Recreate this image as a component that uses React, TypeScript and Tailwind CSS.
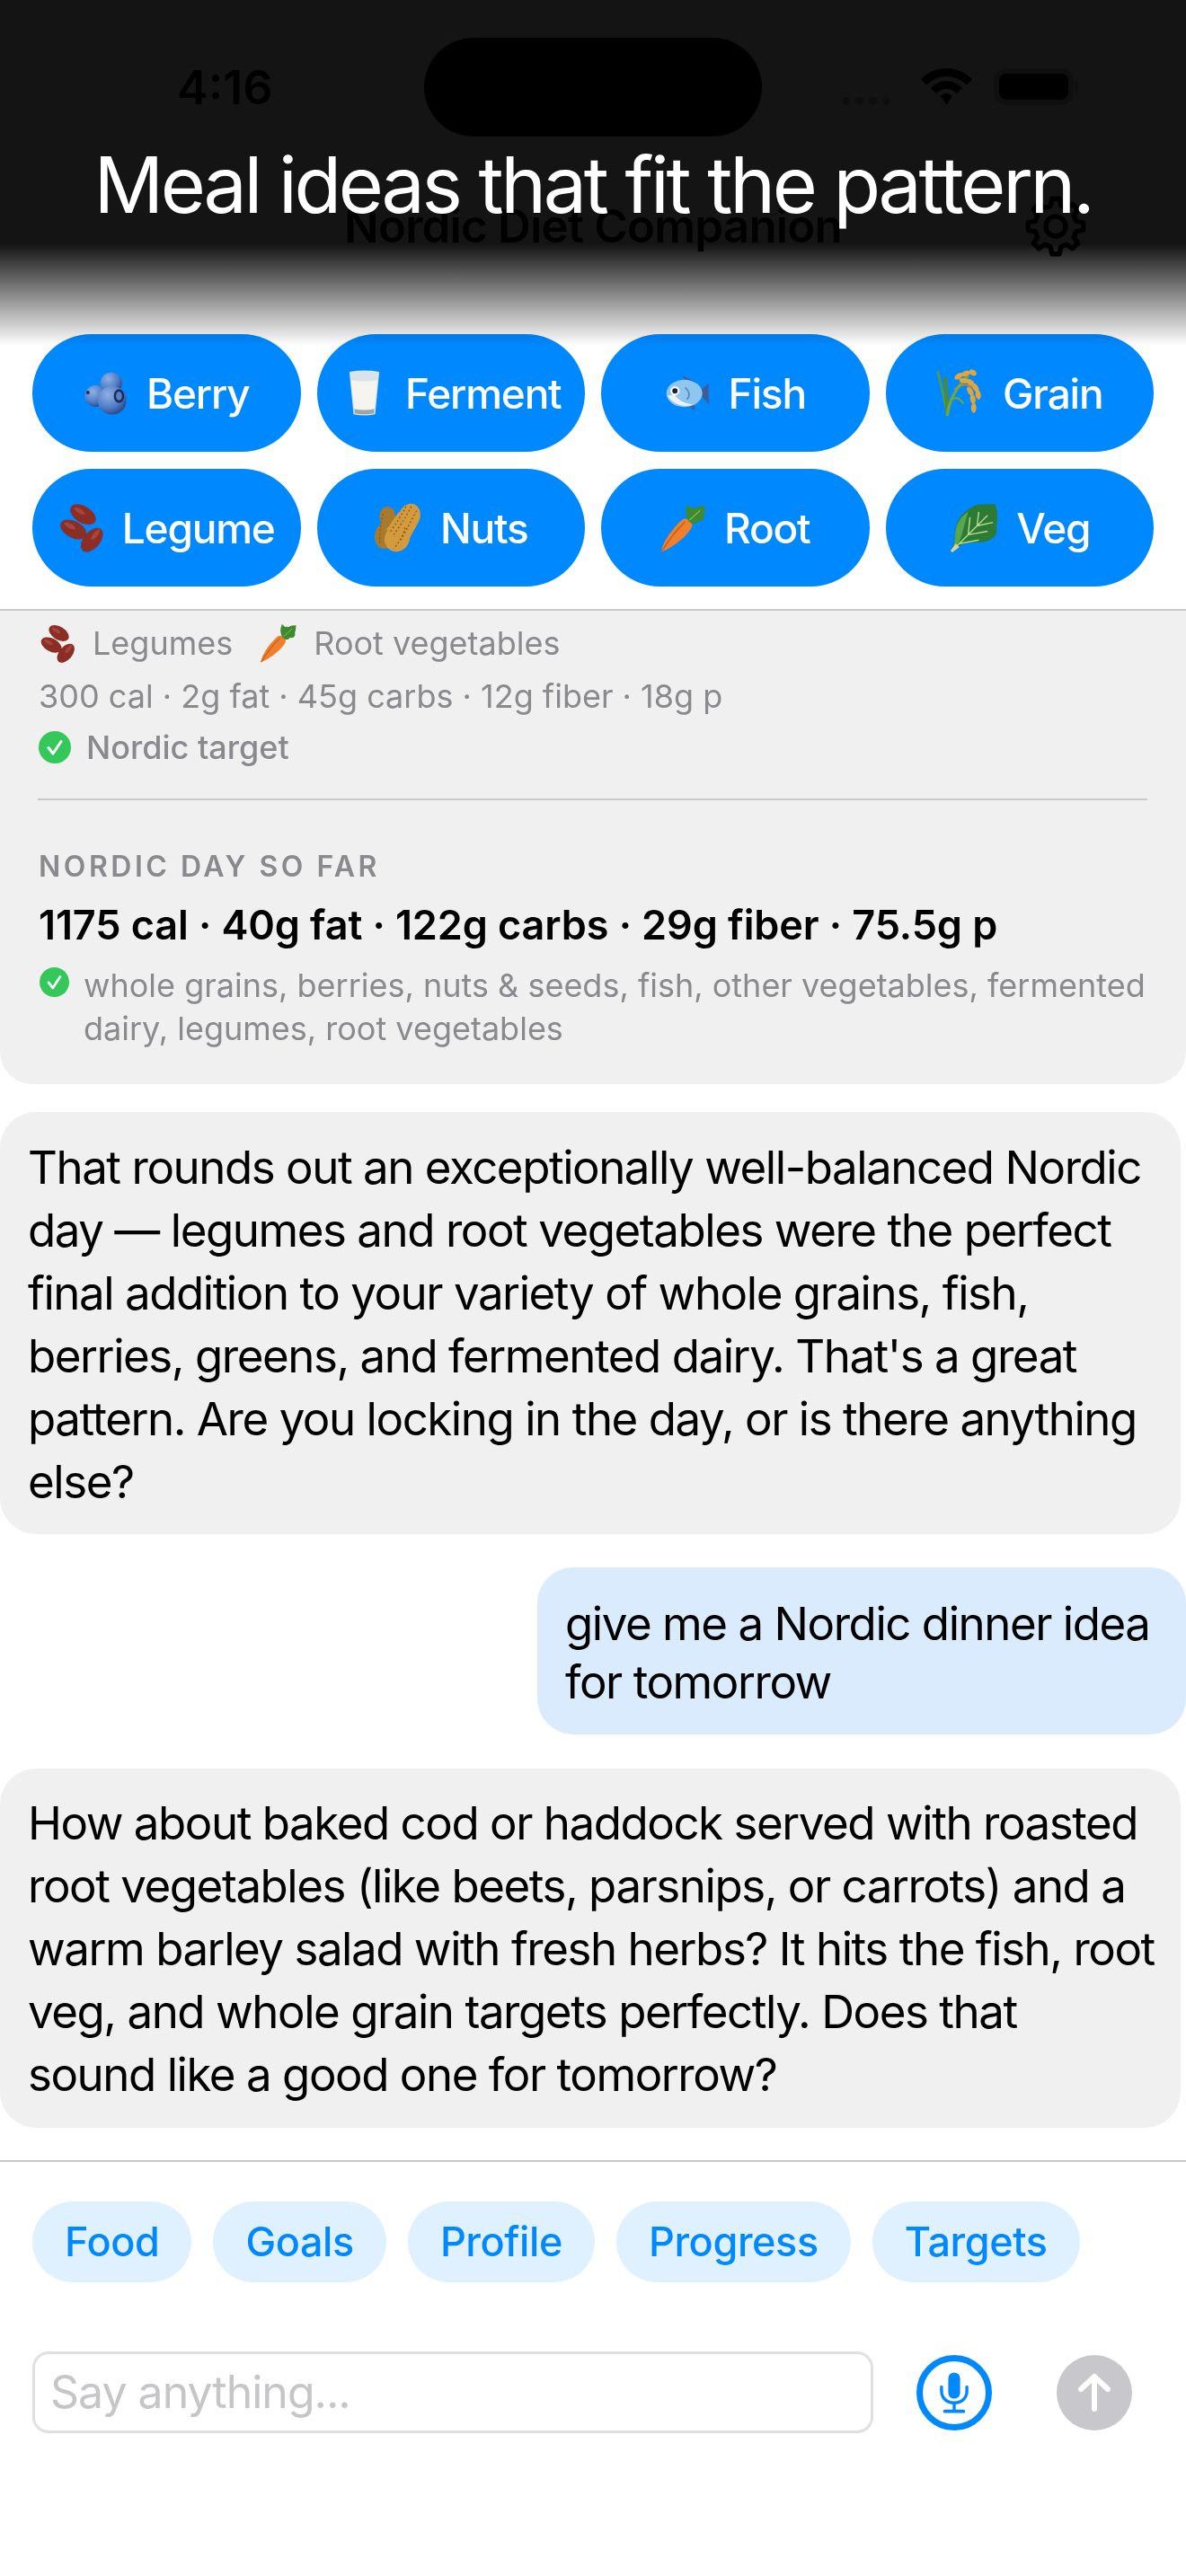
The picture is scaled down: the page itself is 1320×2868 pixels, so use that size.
import React from "react";

function BerryIcon() {
  return (
    <svg viewBox="0 0 50 50" className="w-[50px] h-[48px] shrink-0">
      <defs>
        <radialGradient id="bg1" cx="0.35" cy="0.3" r="0.8"><stop offset="0" stopColor="#8fb0e6" /><stop offset="0.6" stopColor="#4f7cc4" /><stop offset="1" stopColor="#1f3a78" /></radialGradient>
      </defs>
      <circle cx="31" cy="13" r="12.5" fill="url(#bg1)" />
      <circle cx="13" cy="28" r="12.5" fill="url(#bg1)" />
      <circle cx="32" cy="33" r="16.5" fill="url(#bg1)" />
      <ellipse cx="40" cy="28" rx="6" ry="8" fill="#1b2c5c" />
      <ellipse cx="40" cy="28" rx="3.5" ry="5" fill="#5a80c0" />
      <circle cx="4" cy="24" r="2" fill="#1b2c5c" />
    </svg>
  );
}

function MilkIcon() {
  return (
    <svg viewBox="0 0 40 56" className="w-[37px] h-[54px] shrink-0 ml-[8px] mr-[7px]">
      <path d="M2 2 Q20 -1 38 2 L33 53 Q20 56 7 53 Z" fill="#d8e4ea" />
      <path d="M4 12 Q20 15 36 12 L32 47 Q20 49 8 47 Z" fill="#f6f4ee" />
      <path d="M8 47 Q20 49 32 47 L31.5 52 Q20 54 8.5 52 Z" fill="#9aa6aa" />
    </svg>
  );
}

function FishIcon() {
  return (
    <svg viewBox="0 0 52 42" className="w-[51px] h-[40px] shrink-0">
      <path d="M38 20 L51 9 Q49 21 51 34 Z" fill="#3d5d98" />
      <path d="M20 1 Q34 4 42 18 L26 12 Z" fill="#3d5d98" />
      <path d="M22 32 L34 41 L34 28 Z" fill="#3d5d98" />
      <ellipse cx="22" cy="21" rx="21" ry="16" fill="#8fc6ee" />
      <path d="M2 24 Q14 40 32 34 Q18 33 10 22 Z" fill="#eef2f6" />
      <circle cx="11" cy="18" r="5.5" fill="#f4f6f8" />
      <circle cx="11" cy="18" r="3" fill="#1a2238" />
      <path d="M23 14 Q31 22 25 28" stroke="#5d8cc0" strokeWidth="2" fill="none" />
    </svg>
  );
}

function RiceIcon() {
  return (
    <svg viewBox="0 0 54 56" className="w-[54px] h-[55px] shrink-0">
      <path d="M12 54 Q8 30 1 3" stroke="#5c9a3c" strokeWidth="2.4" fill="none" />
      <path d="M12 54 Q12 30 9 10" stroke="#4e8a34" strokeWidth="4" fill="none" />
      <path d="M12 54 Q14 30 36 8" stroke="#6ea644" strokeWidth="3.5" fill="none" />
      <path d="M16 36 Q24 30 30 40" stroke="#6ea644" strokeWidth="2.4" fill="none" />
      <path d="M20 24 Q34 12 48 28" stroke="#c98d2e" strokeWidth="1.4" fill="none" />
      <g fill="#e0a63e">
        <ellipse cx="25" cy="9" rx="5.5" ry="3" transform="rotate(-35 25 9)" />
        <ellipse cx="33" cy="6" rx="5.5" ry="3" transform="rotate(-20 33 6)" />
        <ellipse cx="41" cy="5" rx="4.5" ry="3" transform="rotate(30 41 5)" />
        <ellipse cx="31" cy="14" rx="5.5" ry="3" transform="rotate(10 31 14)" />
        <ellipse cx="38" cy="16" rx="5.5" ry="3" transform="rotate(35 38 16)" />
        <ellipse cx="44" cy="22" rx="5.5" ry="3" transform="rotate(60 44 22)" />
        <ellipse cx="47" cy="30" rx="5.5" ry="3" transform="rotate(80 47 30)" />
        <ellipse cx="38" cy="26" rx="5.5" ry="3" transform="rotate(60 38 26)" />
        <ellipse cx="41" cy="35" rx="5.5" ry="3" transform="rotate(80 41 35)" />
        <ellipse cx="42" cy="45" rx="5.5" ry="3" transform="rotate(90 42 45)" />
      </g>
    </svg>
  );
}

function BeansIcon({ cls }: { cls: string }) {
  return (
    <svg viewBox="0 0 52 56" className={cls}>
      <g fill="#8a2e26">
        <ellipse cx="28" cy="13" rx="16" ry="9.5" transform="rotate(32 28 13)" />
        <ellipse cx="17" cy="30" rx="16" ry="9.5" transform="rotate(28 17 30)" />
        <ellipse cx="38" cy="42" rx="16" ry="9.5" transform="rotate(-50 38 42)" />
      </g>
      <g fill="#b5564b" opacity="0.6">
        <ellipse cx="24" cy="9" rx="7" ry="2.5" transform="rotate(32 24 9)" />
        <ellipse cx="13" cy="26" rx="7" ry="2.5" transform="rotate(28 13 26)" />
        <ellipse cx="42" cy="36" rx="7" ry="2.5" transform="rotate(-50 42 36)" />
      </g>
    </svg>
  );
}

function PeanutIcon() {
  return (
    <svg viewBox="0 0 54 56" className="w-[54px] h-[55px] shrink-0">
      <g fill="#a97a2c">
        <ellipse cx="15" cy="15" rx="9" ry="11" />
        <ellipse cx="11" cy="38" rx="10.5" ry="14" />
        <rect x="7" y="18" width="13" height="16" />
      </g>
      <g fill="#d39a3e">
        <ellipse cx="40" cy="15" rx="12" ry="14.5" transform="rotate(20 40 15)" />
        <ellipse cx="26" cy="40" rx="14" ry="15.5" transform="rotate(30 26 40)" />
        <path d="M28 10 L50 22 L38 44 L14 30 Z" />
      </g>
      <g stroke="#8a5c1c" strokeWidth="1.4" strokeDasharray="2 2.5" fill="none">
        <path d="M42 4 Q34 20 22 36" />
        <path d="M48 9 Q40 24 30 42" />
        <path d="M36 4 Q29 18 17 34" />
        <path d="M35 28 Q32 40 22 52" />
        <path d="M10 12 Q6 30 6 46" />
      </g>
    </svg>
  );
}

function CarrotIcon({ cls }: { cls: string }) {
  return (
    <svg viewBox="0 0 52 56" className={cls}>
      <path d="M1 55 C2 44 14 28 24 19 C30 15 37 19 36 26 C32 36 14 50 1 55 Z" fill="#ee7f2c" />
      <path d="M1 55 C8 44 18 30 28 21" stroke="#c85f1a" strokeWidth="1.4" fill="none" />
      <path d="M32 20 C28 14 28 8 31 1 C34 5 36 6 38 4 C38 8 42 2 51 3 C50 8 51 10 49 13 C51 18 46 22 42 20 C40 24 36 24 32 20 Z" fill="#3f8a2e" />
      <path d="M33 19 L45 8" stroke="#8cc060" strokeWidth="1.2" />
    </svg>
  );
}

function LettuceIcon() {
  return (
    <svg viewBox="0 0 56 56" className="w-[55px] h-[55px] shrink-0">
      <path d="M2 54 C8 46 6 36 8 28 C10 16 18 10 24 6 C32 0 40 2 52 1 C56 8 55 18 54 28 C56 34 52 40 46 42 C38 46 26 44 18 46 C12 48 8 52 4 56 Z" fill="#2c7a34" />
      <path d="M8 30 C10 20 16 14 22 10 C18 22 16 34 12 44 C8 48 6 50 3 54 C8 46 6 38 8 30 Z" fill="#58a650" />
      <path d="M3 55 L44 14 M22 36 L24 16 M22 36 L44 32 M32 26 L34 10 M32 26 L50 22 M12 46 L34 42" stroke="#b6d88e" strokeWidth="1.5" fill="none" />
      <path d="M2 54 L8 46 L12 50 L4 56 Z" fill="#d8d4a0" />
    </svg>
  );
}

function CheckCircle({ cls }: { cls: string }) {
  return (
    <svg viewBox="0 0 36 36" className={cls}>
      <circle cx="18" cy="18" r="18" fill="#34c759" />
      <path d="M11 18.5 L16 25 L25 11.5" stroke="#fff" strokeWidth="3" strokeLinecap="round" strokeLinejoin="round" fill="none" />
    </svg>
  );
}

function gearPath() {
  const teeth = 8;
  const rOut = 31;
  const rIn = 23.5;
  const pts: string[] = [];
  for (let i = 0; i < teeth; i++) {
    const a = (i * 2 * Math.PI) / teeth - Math.PI / 2;
    const step = (2 * Math.PI) / teeth;
    const seq: [number, number][] = [
      [rIn, a - step * 0.32],
      [rOut, a - step * 0.17],
      [rOut, a + step * 0.17],
      [rIn, a + step * 0.32],
    ];
    for (const [r, t] of seq) {
      pts.push(`${(34 + r * Math.cos(t)).toFixed(2)} ${(34 + r * Math.sin(t)).toFixed(2)}`);
    }
  }
  return "M" + pts.join(" L") + " Z";
}

function Gear() {
  return (
    <svg viewBox="0 0 68 68" className="w-[68px] h-[68px]" fill="none" stroke="#000" strokeWidth="5.5" strokeLinejoin="round">
      <path d={gearPath()} />
      <circle cx="34" cy="34" r="11" />
    </svg>
  );
}

const chips1 = [
  { label: "Berry", icon: <BerryIcon /> },
  { label: "Ferment", icon: <MilkIcon /> },
  { label: "Fish", icon: <FishIcon /> },
  { label: "Grain", icon: <RiceIcon /> },
  { label: "Legume", icon: <BeansIcon cls="w-[51px] h-[55px] shrink-0" /> },
  { label: "Nuts", icon: <PeanutIcon /> },
  { label: "Root", icon: <CarrotIcon cls="w-[51px] h-[56px] shrink-0" /> },
  { label: "Veg", icon: <LettuceIcon /> },
];

export default function App() {
  return (
    <div className="relative w-[1320px] h-[2868px] overflow-hidden bg-white text-black font-['Inter','Liberation_Sans',sans-serif]">
      {/* status bar */}
      <div className="h-[170px] flex items-start">
        <div className="w-[472px] pt-[72px] pl-[197px] text-[52px] leading-[52px] font-semibold">4:16</div>
        <div className="w-[376px] h-[110px] mt-[42px] rounded-[55px] bg-black" />
        <div className="flex-1 pt-[76px] pl-[89px] flex items-start">
          <div className="mt-[32px] flex gap-[6px] w-[88px]">
            <span className="w-[9px] h-[9px] rounded-full bg-black/30" />
            <span className="w-[9px] h-[9px] rounded-full bg-black/30" />
            <span className="w-[9px] h-[9px] rounded-full bg-black/30" />
            <span className="w-[9px] h-[9px] rounded-full bg-black/30" />
          </div>
          <svg viewBox="0 0 57 41" className="w-[57px] h-[41px]">
            <path d="M28.5 0 C39 0 49 4 57 12 L51 19 C45 13 37 9 28.5 9 C20 9 12 13 6 19 L0 12 C8 4 18 0 28.5 0 Z" fill="#000" />
            <path d="M28.5 14 C35 14 41 17 46 22 L40 28 C37 25 33 23 28.5 23 C24 23 20 25 17 28 L11 22 C16 17 22 14 28.5 14 Z" fill="#000" />
            <path d="M28.5 28 C31 28 33 29 35 31 L28.5 41 L22 31 C24 29 26 28 28.5 28 Z" fill="#000" />
          </svg>
          <div className="ml-[24px] flex items-center">
            <div className="w-[89px] h-[41px] rounded-[14px] border-[6px] border-black/25 flex">
              <div className="flex-1 rounded-[8px] bg-black" />
            </div>
            <div className="w-[4px] h-[14px] ml-[1px] rounded-r-full bg-black/25" />
          </div>
        </div>
      </div>

      {/* nav title */}
      <div className="h-[202px] relative">
        <div className="pt-[52px] text-center text-[51px] leading-[60px] font-semibold tracking-[-0.8px]">Nordic Diet Companion</div>
        <div className="absolute left-[1141px] top-[48px]"><Gear /></div>
      </div>

      {/* filter buttons */}
      <div className="grid grid-cols-4 auto-rows-[131px] gap-x-[18px] gap-y-[19px] px-[36px] h-[306px]">
        {chips1.map((c) => (
          <div key={c.label} className="rounded-[66px] bg-[#0088ff] flex items-center justify-center gap-[20px] text-white text-[46px] leading-[56px] font-medium tracking-[-1.2px]">
            {c.icon}
            <span>{c.label}</span>
          </div>
        ))}
      </div>

      {/* summary card */}
      <div className="border-t-2 border-[#c8c8c8] bg-[#f0f0f0] rounded-b-[36px] h-[529px] px-[43px] text-[#8a8a8e]">
        <div className="h-[72px] flex items-center text-[36px] leading-[44px]">
          <BeansIcon cls="w-[42px] h-[43px] shrink-0" />
          <span className="ml-[18px]">Legumes</span>
          <CarrotIcon cls="w-[42px] h-[44px] shrink-0 ml-[30px]" />
          <span className="ml-[18px]">Root vegetables</span>
        </div>
        <div className="mt-[1px] text-[36px] leading-[44px]">300 cal · 2g fat · 45g carbs · 12g fiber · 18g p</div>
        <div className="mt-[13px] flex items-center text-[36px] leading-[44px] font-medium">
          <CheckCircle cls="w-[36px] h-[36px] shrink-0" />
          <span className="ml-[17px]">Nordic target</span>
        </div>
        <div className="mt-[35px] -ml-[1px] h-[2px] bg-[#c8c8c8]" />
        <div className="mt-[62px] text-[32px] leading-[24px] font-semibold tracking-[3.5px]">NORDIC DAY SO FAR</div>
        <div className="mt-[26px] text-[45px] leading-[54px] font-semibold tracking-[-0.1px] text-black">1175 cal · 40g fat · 122g carbs · 29g fiber · 75.5g p</div>
        <div className="mt-[16px] flex items-start text-[36px] leading-[48px]">
          <CheckCircle cls="w-[33px] h-[33px] shrink-0 mt-[4px] ml-[1px]" />
          <span className="ml-[16px]">whole grains, berries, nuts &amp; seeds, fish, other vegetables, fermented dairy, legumes, root vegetables</span>
        </div>
      </div>

      {/* messages */}
      <div className="mt-[31px] mr-[6px] rounded-[40px] bg-[#f0f0f0] h-[470px] px-[31px] pt-[27px] text-[51px] leading-[70px] tracking-[-1.45px]">
        That rounds out an exceptionally well-balanced Nordic day — legumes and root vegetables were the perfect final addition to your variety of whole grains, fish, berries, greens, and fermented dairy. That's a great pattern. Are you locking in the day, or is there anything else?
      </div>
      <div className="mt-[37px] ml-[598px] rounded-[40px] bg-[#d9ebfd] h-[186px] pl-[31px] pr-[30px] pt-[30px] text-[51px] leading-[65px] tracking-[-1.45px]">
        give me a Nordic dinner idea for tomorrow
      </div>
      <div className="mt-[38px] mr-[6px] rounded-[40px] bg-[#f0f0f0] h-[400px] pl-[31px] pr-[4px] pt-[26px] text-[51px] leading-[70px] tracking-[-1.45px]">
        How about baked cod or haddock served with roasted root vegetables (like beets, parsnips, or carrots) and a warm barley salad with fresh herbs? It hits the fish, root veg, and whole grain targets perfectly. Does that<br />sound like a good one for tomorrow?
      </div>

      {/* composer */}
      <div className="mt-[36px] border-t-2 border-[#c8c8c8] pt-[44px] px-[36px] flex gap-[24px]">
        {["Food", "Goals", "Profile", "Progress", "Targets"].map((t) => (
          <div key={t} className="h-[90px] px-[36px] rounded-[45px] bg-[#dff0ff] text-[#0088ff] flex items-center text-[45px] font-medium tracking-[-0.4px]">{t}</div>
        ))}
      </div>
      <div className="mt-[77px] px-[36px] flex items-center">
        <div className="w-[936px] h-[91px] rounded-[18px] border-[3px] border-[#e0e0e0] flex items-center pl-[17px] text-[50px] tracking-[-1px] text-[#c6c6c8]">Say anything...</div>
        <div className="ml-[48px] w-[84px] h-[84px] rounded-full border-[7px] border-[#0088ff] flex items-center justify-center">
          <svg viewBox="0 0 34 50" className="w-[32px] h-[48px]" fill="none" stroke="#0088ff">
            <rect x="10" y="1" width="14" height="31" rx="7" fill="#0088ff" stroke="none" />
            <path d="M2 18 V23 C2 32 9 37 17 37 C25 37 32 32 32 23 V18" strokeWidth="3.6" strokeLinecap="round" />
            <path d="M17 37 V46" strokeWidth="3.6" />
            <path d="M6 47 H28" strokeWidth="4" strokeLinecap="round" />
          </svg>
        </div>
        <div className="ml-[72px] w-[84px] h-[84px] rounded-full bg-[#c7c7cc] flex items-center justify-center">
          <svg viewBox="0 0 36 44" className="w-[36px] h-[44px]" fill="none" stroke="#fff" strokeWidth="6" strokeLinecap="round" strokeLinejoin="round">
            <path d="M18 40 V4 M3 18 L18 4 L33 18" />
          </svg>
        </div>
      </div>

      {/* dimmed top overlay */}
      <div className="absolute left-0 top-0 w-full h-[385px] mix-blend-multiply bg-[linear-gradient(to_bottom,#141414_0px,#141414_272px,#ffffff_385px)]" />
      <div className="absolute left-0 top-[156px] w-full text-center text-white text-[86px] leading-[100px] tracking-[-3.3px]">Meal ideas that fit the pattern.</div>
    </div>
  );
}
